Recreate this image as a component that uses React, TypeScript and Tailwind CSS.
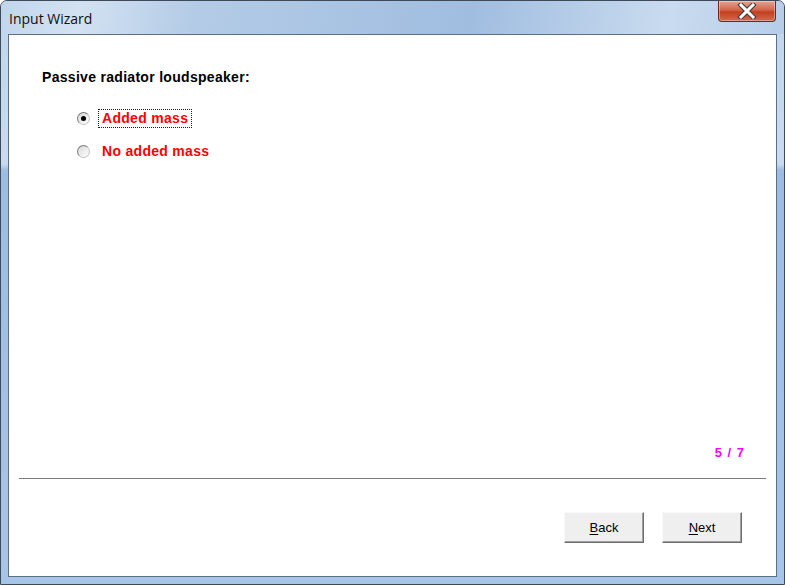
import React from "react";

const Radio = ({ checked }: { checked: boolean }) => (
  <span className="relative flex h-[13px] w-[13px] items-center justify-center rounded-full border border-[#7a7a7a] border-b-[#c4c4c4] border-r-[#c4c4c4] bg-[linear-gradient(135deg,#d8d8d8,#ffffff)]">
    {checked && <span className="h-[5px] w-[5px] rounded-full bg-black" />}
  </span>
);

const WinButton = ({ hot, rest }: { hot: string; rest: string }) => (
  <button className="flex h-[31px] w-[80px] items-center justify-center border border-[#f9f9f9] border-r-[#6d6d6d] border-b-[#6d6d6d] bg-[#efefef] text-[13px] text-black shadow-[inset_-1px_-1px_0_#a0a0a0]">
    <span>
      <span className="underline underline-offset-2">{hot}</span>
      {rest}
    </span>
  </button>
);

export default function App() {
  return (
    <div
      className="flex h-[585px] w-[785px] flex-col overflow-hidden rounded-t-[7px] border border-[#3e4a57] bg-[linear-gradient(to_bottom,#c0d5ec_0%,#c8dbef_28%,#9dbce2_29%,#a7c5e8_100%)]"
      style={{ fontFamily: '"Liberation Sans", Arial, sans-serif' }}
    >
      {/* title bar */}
      <div className="flex h-[33px] shrink-0 items-start justify-between bg-[linear-gradient(100deg,#c1d5ec_0%,#d3e2f2_10%,#b3cbe6_25%,#a0bde0_60%,#c9dbef_85%,#b7cde8_100%)]">
        <span
          className="pl-[8px] pt-[8px] text-[14px] leading-[19px] text-[#101010]"
          style={{ fontFamily: '"Open Sans", "Noto Sans", sans-serif' }}
        >
          Input Wizard
        </span>
        <div className="mr-[8px] flex h-[21px] w-[58px] items-center justify-center rounded-b-[4px] border border-t-0 border-[#6b2a20] bg-[linear-gradient(to_bottom,#e3a593_0%,#d1654c_45%,#c2401f_55%,#d26a4f_100%)] shadow-[inset_0_0_0_1px_rgba(255,255,255,0.35)]">
          <svg width="20" height="16" viewBox="0 0 20 16">
            <path d="M4 2 L16 14 M16 2 L4 14" stroke="#3a3a3a" strokeWidth="5" strokeLinecap="square" />
            <path d="M4 2 L16 14 M16 2 L4 14" stroke="#ffffff" strokeWidth="3" strokeLinecap="square" />
          </svg>
        </div>
      </div>

      {/* client area */}
      <div className="mx-[7px] mb-[7px] flex flex-1 flex-col border border-[#5c6f84] bg-white">
        <div className="flex flex-1 flex-col pl-[33px] pt-[34px]">
          <p className="text-[14px] font-bold leading-[17px] tracking-[0.3px] text-black">
            Passive radiator loudspeaker:
          </p>
          <div className="mt-[23px] flex flex-col gap-[15px] pl-[35px]">
            <label className="flex items-center">
              <Radio checked />
              <span className="ml-[8px] border border-dotted border-[#1b1b1b] px-[3px] text-[14px] font-bold leading-[17px] tracking-[0.3px] text-[#ff0000]">
                Added mass
              </span>
            </label>
            <label className="flex items-center">
              <Radio checked={false} />
              <span className="ml-[12px] text-[14px] font-bold leading-[17px] tracking-[0.3px] text-[#ff0000]">
                No added mass
              </span>
            </label>
          </div>
          <div className="flex-1" />
          <div className="flex justify-end pr-[31px]">
            <span className="text-[13px] font-bold leading-[16px] tracking-[1px] text-[#ff00ff]">5 / 7</span>
          </div>
        </div>
        <div className="mx-[10px] mt-[17px] h-px bg-[#7a7a7a]" />
        <div className="flex justify-end gap-[18px] pr-[34px] pt-[33px] pb-[33px]">
          <WinButton hot="B" rest="ack" />
          <WinButton hot="N" rest="ext" />
        </div>
      </div>
    </div>
  );
}
